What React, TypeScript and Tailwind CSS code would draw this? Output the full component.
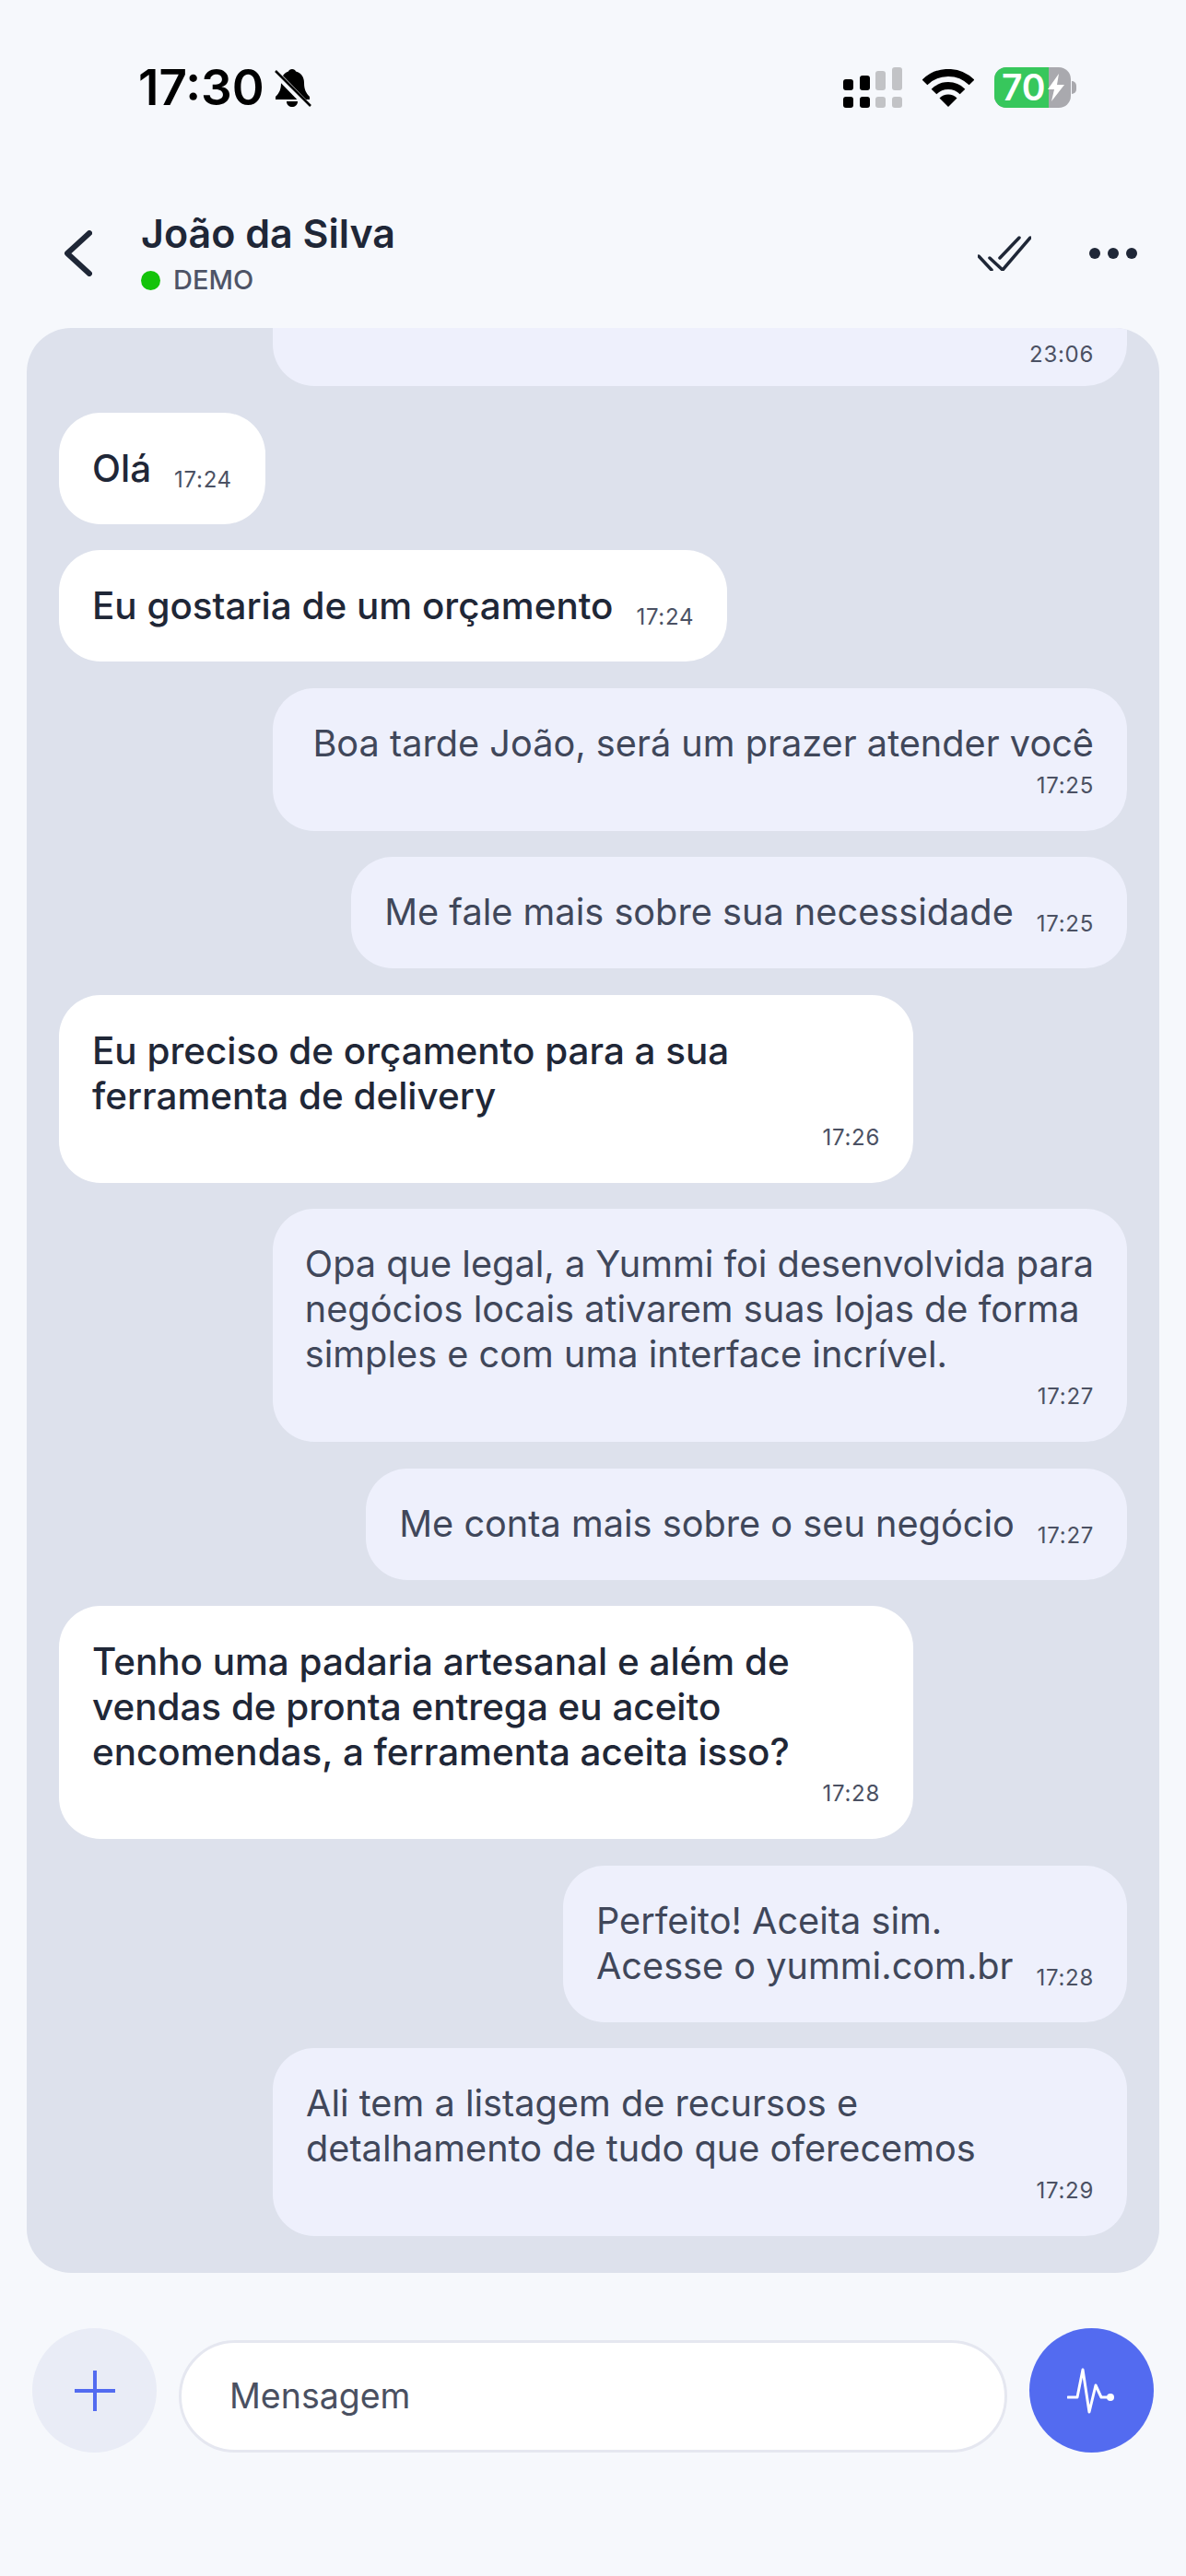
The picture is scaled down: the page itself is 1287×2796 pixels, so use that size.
import React from 'react';

type Msg = { text: string[]; time: string; mine?: boolean; inline?: boolean };

const messages: Msg[] = [
  { text: ['Olá'], time: '17:24', inline: true },
  { text: ['Eu gostaria de um orçamento'], time: '17:24', inline: true },
  { text: ['Boa tarde João, será um prazer atender você'], time: '17:25', mine: true },
  { text: ['Me fale mais sobre sua necessidade'], time: '17:25', mine: true, inline: true },
  { text: ['Eu preciso de orçamento para a sua ferramenta de delivery'], time: '17:26' },
  { text: ['Opa que legal, a Yummi foi desenvolvida para', 'negócios locais ativarem suas lojas de forma', 'simples e com uma interface incrível.'], time: '17:27', mine: true },
  { text: ['Me conta mais sobre o seu negócio'], time: '17:27', mine: true, inline: true },
  { text: ['Tenho uma padaria artesanal e além de vendas de pronta entrega eu aceito encomendas, a ferramenta aceita isso?'], time: '17:28' },
  { text: ['Perfeito! Aceita sim.', 'Acesse o yummi.com.br'], time: '17:28', mine: true, inline: true },
  { text: ['Ali tem a listagem de recursos e detalhamento de tudo que oferecemos'], time: '17:29', mine: true },
];

function Bubble({ msg }: { msg: Msg }) {
  const color = msg.mine
    ? 'bg-[#eef0fc] text-[#40475a] self-end font-normal text-[39.7px]'
    : 'bg-white text-[#1f2737] self-start font-medium text-[40.4px]';
  const lines = msg.text.map((line) => (
    <div key={line} className={msg.text.length > 1 ? 'whitespace-nowrap' : ''}>{line}</div>
  ));

  if (msg.inline) {
    return (
      <div className={`${color} flex items-end gap-[25px] rounded-[45px] px-[36px] py-[36px] leading-[49px] max-w-[927px]`}>
        <div>{lines}</div>
        <div className="mb-[-3px] h-[30px] shrink-0 text-[24px] leading-[30px] font-normal tracking-[0.7px] text-[#4b5163]">{msg.time}</div>
      </div>
    );
  }
  return (
    <div className={`${color} flex flex-col items-end gap-[6px] rounded-[45px] px-[36px] pt-[36px] pb-[34px] leading-[49px] w-[927px]`}>
      <div>{lines}</div>
      <div className="h-[30px] shrink-0 text-[24px] leading-[30px] font-normal tracking-[0.7px] text-[#4b5163]">{msg.time}</div>
    </div>
  );
}

function StatusBar() {
  return (
    <div className="h-[190px] flex items-center justify-between pl-[150px] pr-[119px]">
      <div className="flex items-center gap-[10px]">
        <span className="text-[53px] leading-none font-semibold text-black">17:30</span>
        <svg width="41" height="43" viewBox="0 0 41 43">
          <path d="M20 1c2 0 3.500 1 4 2.500C30 5 33 10 33 16c0 7 2 11 6 15v3H2v-3c4-4 6-8 6-15 0-6 3-11 8-12.500C16.500 2 18 1 20 1z" fill="#000" />
          <path d="M14 36h12c0 4-3 6-6 6s-6-2-6-6z" fill="#000" />
          <path d="M1 4l37 38" stroke="#f6f8fc" strokeWidth="7" />
          <path d="M2 3l38 38" stroke="#000" strokeWidth="2.500" />
        </svg>
      </div>
      <div className="flex items-center gap-[22px]">
        <svg width="64" height="44" viewBox="0 0 64 44">
          <rect x="0" y="13" width="11" height="12" rx="3" fill="#000" />
          <rect x="0" y="32" width="11" height="12" rx="3" fill="#000" />
          <rect x="18" y="9" width="11" height="16" rx="3" fill="#000" />
          <rect x="18" y="32" width="11" height="12" rx="3" fill="#000" />
          <rect x="35" y="4" width="11" height="21" rx="3" fill="#c2c3c6" />
          <rect x="35" y="32" width="11" height="12" rx="3" fill="#c2c3c6" />
          <rect x="53" y="0" width="11" height="25" rx="3" fill="#c2c3c6" />
          <rect x="53" y="32" width="11" height="12" rx="3" fill="#c2c3c6" />
        </svg>
        <svg width="56" height="41" viewBox="0 0 56 41">
          <path d="M2.500 14.500a36 36 0 0 1 51 0" fill="none" stroke="#000" strokeWidth="8" />
          <path d="M12.500 24.500a22 22 0 0 1 31 0" fill="none" stroke="#000" strokeWidth="8" />
          <path d="M28 41l-9.500-9.500a13.400 13.400 0 0 1 19 0z" fill="#000" />
        </svg>
        <div className="flex items-center gap-[1px]">
          <div className="relative flex h-[44px] w-[83px] rounded-[13px] bg-[#a9a9ae]">
            <div className="w-[59px] whitespace-nowrap rounded-l-[13px] bg-[#37c75c] pl-[8px] text-[39px] leading-[44px] font-semibold text-white">70</div>
            <svg className="absolute left-[57px] top-[7px]" width="20" height="30" viewBox="0 0 20 30">
              <path d="M13 0L1 17h7l-3 13L19 12h-8z" fill="#fff" />
            </svg>
          </div>
          <div className="h-[14px] w-[5px] rounded-r-[5px] bg-[#a9a9ae]" />
        </div>
      </div>
    </div>
  );
}

function Header() {
  return (
    <div className="h-[166px] flex items-center pl-[70px] pr-[53px] pt-[3px]">
      <svg width="30" height="50" viewBox="0 0 30 50" fill="none" stroke="#1f2737" strokeWidth="6" strokeLinecap="round" strokeLinejoin="round">
        <path d="M27 3L3 25l24 22" />
      </svg>
      <div className="ml-[53px] flex-1">
        <div className="text-[43px] leading-[52px] font-semibold text-[#1f2737]">João da Silva</div>
        <div className="mt-[7px] flex items-center gap-[14px]">
          <span className="h-[21px] w-[21px] rounded-full bg-[#14c30a]" />
          <span className="text-[29px] leading-[36px] font-medium text-[#4e5467]">DEMO</span>
        </div>
      </div>
      <svg width="58" height="38" viewBox="0 0 58 38" fill="none" stroke="#1f2737" strokeWidth="3.500" strokeLinecap="round" strokeLinejoin="round">
        <path d="M1 22l14 15" />
        <path d="M13 24l14 13L57 2" />
        <path d="M24 24L45 2" />
      </svg>
      <div className="ml-[63px] flex gap-[8px]">
        <span className="h-[12px] w-[12px] rounded-full bg-[#1f2737]" />
        <span className="h-[12px] w-[12px] rounded-full bg-[#1f2737]" />
        <span className="h-[12px] w-[12px] rounded-full bg-[#1f2737]" />
      </div>
    </div>
  );
}

export default function App() {
  return (
    <div className="w-[1287px] h-[2796px] overflow-hidden bg-[#f6f8fc] font-['Inter',sans-serif]">
      <StatusBar />
      <Header />

      <div className="mx-[29px] flex h-[2111px] flex-col gap-[28.5px] overflow-hidden rounded-[48px] bg-[#dde1ec] px-[35px]">
        {/* cut off by the scroll position */}
        <div className="self-end flex h-[63px] w-[927px] shrink-0 items-end justify-end rounded-b-[45px] bg-[#eef0fc] px-[36px] pb-[19px] text-[24px] leading-[30px] tracking-[0.7px] text-[#4b5163]">
          23:06
        </div>
        {messages.map((msg, i) => (
          <Bubble key={i} msg={msg} />
        ))}
      </div>

      <div className="mt-[60px] flex items-end gap-[24px] pl-[35px] pr-[35px]">
        <div className="flex h-[135px] w-[135px] items-center justify-center rounded-full bg-[#e9ecf6]">
          <svg width="44" height="44" viewBox="0 0 44 44" stroke="#536bf0" strokeWidth="4">
            <path d="M22 0v44M0 22h44" />
          </svg>
        </div>
        <div className="flex h-[122px] flex-1 items-center rounded-full border-[3px] border-[#e5e7f0] bg-white pl-[52px] text-[37.5px] text-[#4a5061]">
          Mensagem
        </div>
        <div className="flex h-[135px] w-[135px] items-center justify-center rounded-full bg-[#536bf0]">
          <svg width="54" height="50" viewBox="0 0 54 50" fill="none" stroke="#fff" strokeWidth="3" strokeLinejoin="round" strokeLinecap="round">
            <path d="M1 32h10l6-30 7 46 7-29 6 13h6" />
            <circle cx="47" cy="32" r="4" fill="#fff" stroke="none" />
          </svg>
        </div>
      </div>
    </div>
  );
}
